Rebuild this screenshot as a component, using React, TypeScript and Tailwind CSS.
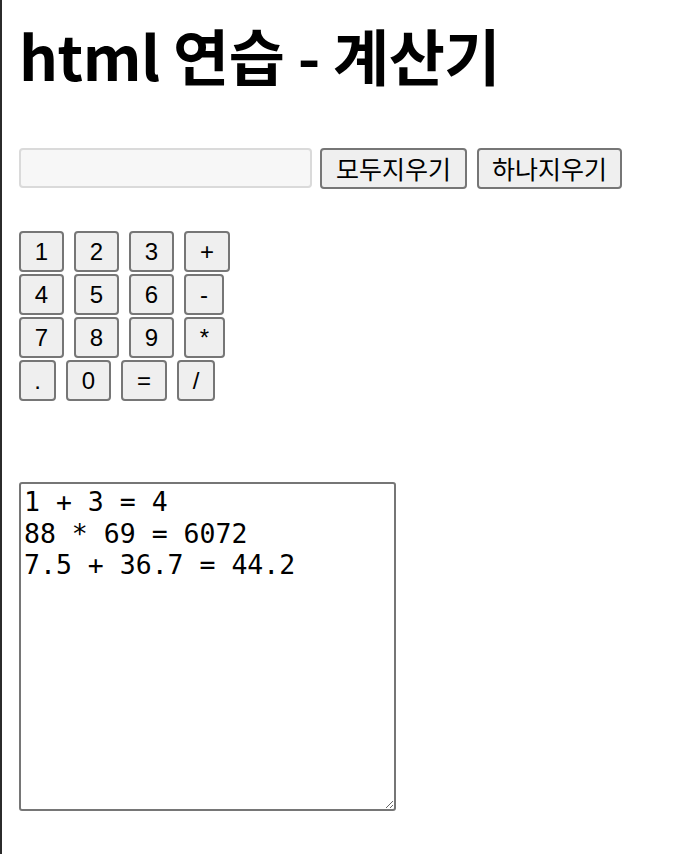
import React from "react";

const keyRows: { label: string; w: string }[][] = [
  [
    { label: "1", w: "w-[45px]" },
    { label: "2", w: "w-[45px]" },
    { label: "3", w: "w-[45px]" },
    { label: "+", w: "w-[46px]" },
  ],
  [
    { label: "4", w: "w-[45px]" },
    { label: "5", w: "w-[45px]" },
    { label: "6", w: "w-[45px]" },
    { label: "-", w: "w-[40px]" },
  ],
  [
    { label: "7", w: "w-[45px]" },
    { label: "8", w: "w-[45px]" },
    { label: "9", w: "w-[45px]" },
    { label: "*", w: "w-[41px]" },
  ],
  [
    { label: ".", w: "w-[37px]" },
    { label: "0", w: "w-[45px]" },
    { label: "=", w: "w-[46px]" },
    { label: "/", w: "w-[38px]" },
  ],
];

const btn =
  "flex items-center justify-center h-[41px] border-2 border-[#767676] rounded-[4px] bg-[#efefef] text-black";

const history = "1 + 3 = 4\n88 * 69 = 6072\n7.5 + 36.7 = 44.2";

export default function App() {
  return (
    <div className="min-h-screen bg-white border-l-2 border-[#2b2b2b] pl-[17px] font-['Liberation_Sans','Noto_Sans_CJK_KR',sans-serif] text-black">
      {/* TITLE */}
      <h1 className="pt-[24px] text-[61px] leading-none tracking-[-0.5px] font-bold font-['Noto_Sans_CJK_KR',sans-serif]">
        html 연습 - 계산기
      </h1>

      {/* DISPLAY + CLEAR BUTTONS */}
      <div className="mt-[63px] flex items-start">
        <input
          readOnly
          className="w-[293px] h-[40px] border-2 border-[#dadada] rounded-[4px] bg-[#f7f7f7] outline-none"
        />
        <button className={`${btn} ml-[8px] w-[147px] text-[25px] font-['Noto_Sans_CJK_KR',sans-serif]`}>모두지우기</button>
        <button className={`${btn} ml-[10px] w-[145px] text-[25px] font-['Noto_Sans_CJK_KR',sans-serif]`}>하나지우기</button>
      </div>

      {/* KEYPAD */}
      <div className="mt-[42px] flex flex-col gap-[2px]">
        {keyRows.map((row, i) => (
          <div className="flex gap-[10px]" key={i}>
            {row.map((k) => (
              <button className={`${btn} ${k.w} text-[24px]`} key={k.label}>
                {k.label}
              </button>
            ))}
          </div>
        ))}
      </div>

      {/* HISTORY */}
      <textarea
        readOnly
        value={history}
        className="block mt-[81px] w-[377px] h-[329px] border-2 border-[#767676] rounded-[3px] pt-[2px] pl-[3px] font-['DejaVu_Sans_Mono',monospace] text-[26.5px] leading-[31.5px] outline-none"
      />
    </div>
  );
}
